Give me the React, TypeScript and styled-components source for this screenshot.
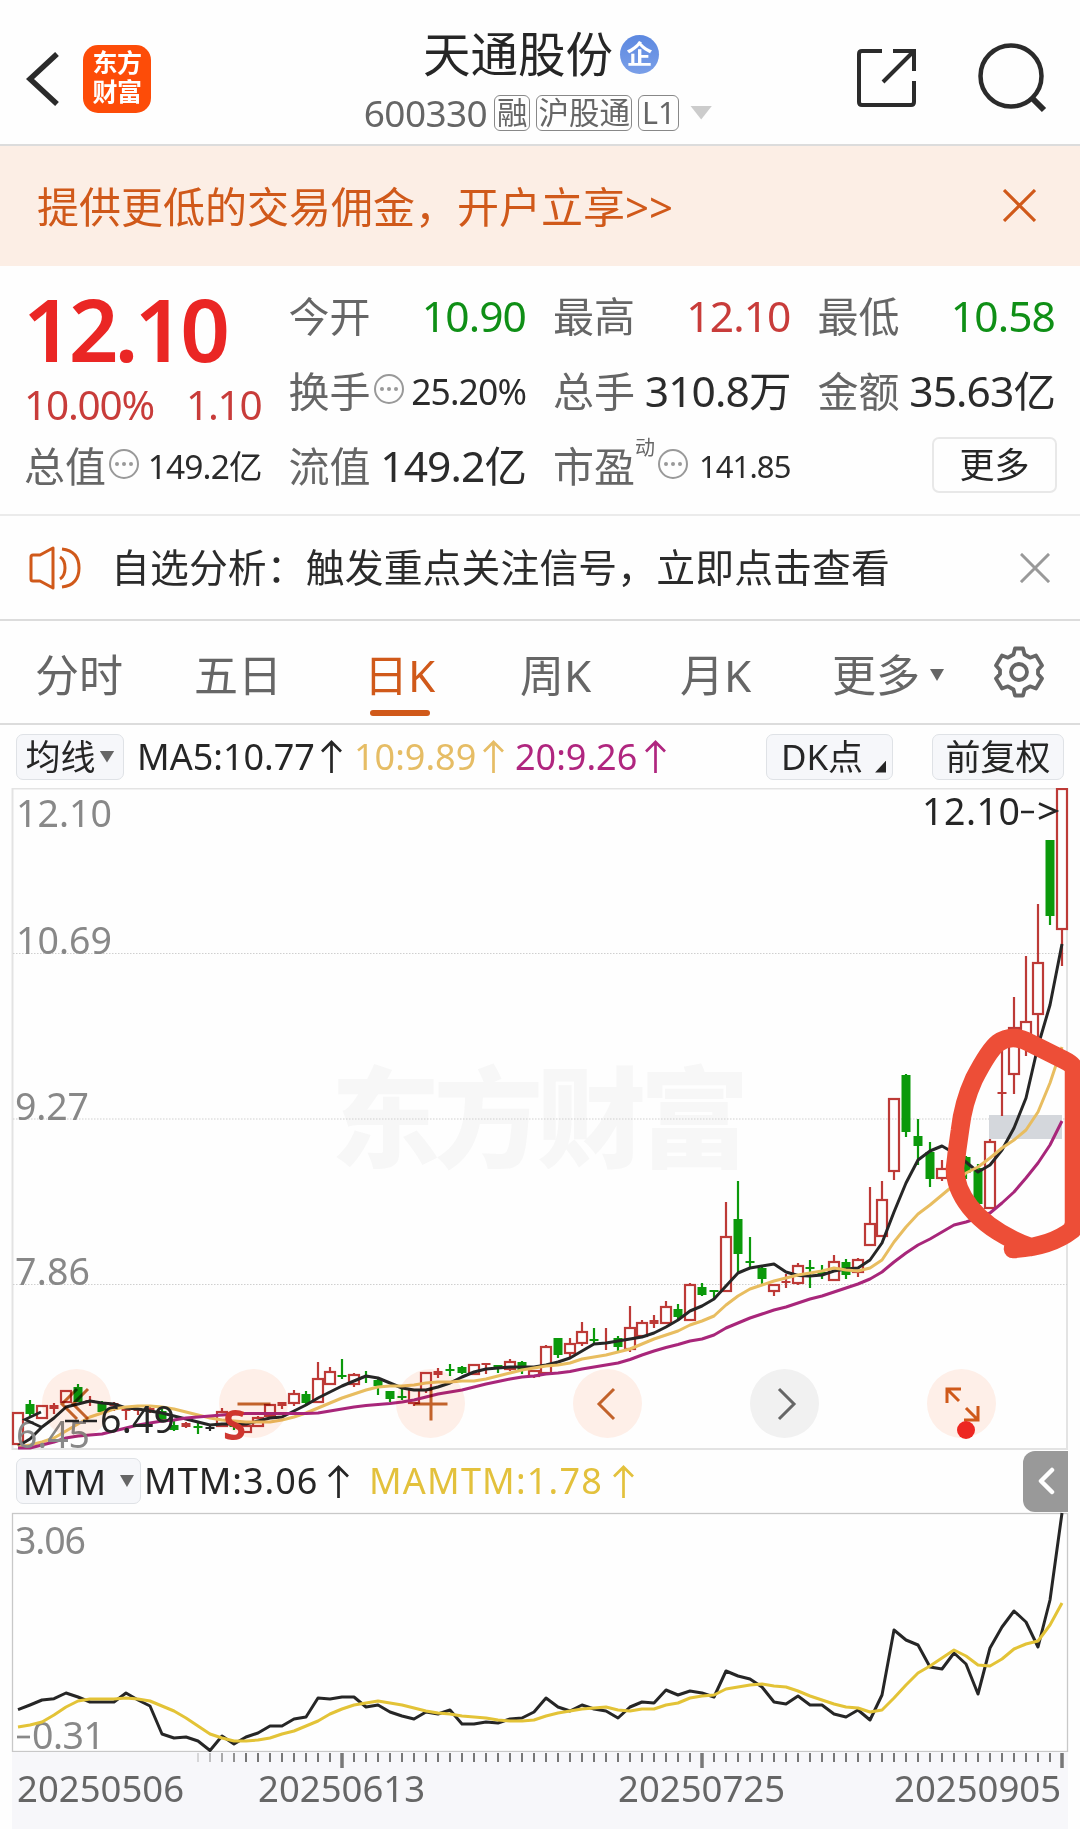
import React from 'react';
import styled, { createGlobalStyle } from 'styled-components';

const FONT = '"Noto Sans", "Noto Sans CJK SC", sans-serif';
const ORANGE = '#d0591a';
const RED = '#bd3a37';
const GREEN = '#0b990b';
const INK = '#262626';

const Global = createGlobalStyle`
  * { box-sizing: border-box; }
  body { margin: 0; background: #fefefe; font-family: ${FONT}; color: ${INK}; }
  button { font-family: inherit; color: inherit; padding: 0; margin: 0; background: none; border: 0; }
  svg { display: block; flex: none; }
`;

const Page = styled.main`
  width: 1080px;
  height: 1829px;
  overflow: hidden;
  display: flex;
  flex-direction: column;
  line-height: 1;
`;

/* ---------- header ---------- */
const Header = styled.header`
  height: 146px;
  flex: none;
  display: grid;
  grid-template-columns: 326px 1fr 326px;
  border-bottom: 2px solid #dcdcdc;
`;
const HeaderLeft = styled.div`
  display: flex;
  align-items: center;
  gap: 23px;
  padding: 13px 0 0 26px;
`;
const HeaderRight = styled.div`
  display: flex;
  align-items: center;
  justify-content: flex-end;
  gap: 60px;
  padding: 12px 33px 0 0;
`;
const Logo = styled.div`
  width: 68px;
  height: 68px;
  padding-bottom: 4px;
  border-radius: 15px;
  background: #fd4c08;
  color: #fff;
  font-size: 25px;
  font-weight: 700;
  line-height: 29px;
  display: grid;
  place-content: center;
  text-align: center;
  letter-spacing: -0.5px;
`;
const HeaderCenter = styled.div`
  display: flex;
  flex-direction: column;
  align-items: center;
`;
const TitleRow = styled.h1`
  margin: 29px 0 0;
  padding-left: 2px;
  height: 50px;
  display: flex;
  align-items: center;
  gap: 7px;
  font-size: 47.5px;
  font-weight: 400;
`;
const CorpBadge = styled.span`
  width: 39px;
  height: 39px;
  border-radius: 50%;
  background: linear-gradient(#5c88e0, #7a9fe8);
  color: #fff;
  font-size: 26px;
  font-weight: 700;
  display: grid;
  place-content: center;
`;
const CodeRow = styled.div`
  margin-top: 15px;
  height: 37px;
  display: flex;
  align-items: center;
  gap: 6px;
  color: #666;
  padding-right: 4px;
`;
const Code = styled.span`
  font-size: 37px;
  letter-spacing: -0.6px;
  margin-right: 1px;
`;
const Tag = styled.span<{ $w: number }>`
  width: ${(p) => p.$w}px;
  height: 36px;
  border: 1.5px solid #888;
  border-radius: 6px;
  font-size: 30.5px;
  display: grid;
  place-content: center;
  white-space: nowrap;
`;
const Caret = styled.i<{ $w: number; $h: number; $c?: string; $ml?: number }>`
  flex: none;
  width: ${(p) => p.$w}px;
  height: ${(p) => p.$h}px;
  margin-left: ${(p) => p.$ml ?? 0}px;
  background: ${(p) => p.$c || '#666'};
  clip-path: polygon(0 0, 100% 0, 50% 100%);
`;

/* ---------- promo banner ---------- */
const Banner = styled.section`
  height: 120px;
  flex: none;
  display: flex;
  align-items: center;
  justify-content: space-between;
  padding: 1px 44px 0 37px;
  background: #fceee5;
  color: ${ORANGE};
  font-size: 42px;
  & > svg { margin-top: -3px; }
`;

/* ---------- quote ---------- */
const Quote = styled.section`
  height: 250px;
  flex: none;
  padding: 13px 25px 0 24px;
  display: grid;
  grid-template-columns: repeat(4, 237.5px);
  grid-template-rows: repeat(3, 75px);
  column-gap: 27px;
  border-bottom: 2px solid #ebebeb;
`;
const PriceCell = styled.div`
  grid-row: span 2;
  display: flex;
  flex-direction: column;
`;
const Price = styled.strong`
  height: 102px;
  margin-left: -1px;
  padding-bottom: 4px;
  display: flex;
  align-items: center;
  color: #ea2624;
  font-size: 87px;
  font-weight: 600;
  letter-spacing: -4px;
`;
const Change = styled.div`
  height: 46px;
  padding-top: 3px;
  display: flex;
  align-items: center;
  justify-content: space-between;
  font-size: 40.5px;
  letter-spacing: -1.2px;
  color: #c83c3a;
`;
const Cell = styled.div`
  display: flex;
  align-items: center;
  white-space: nowrap;
`;
const Label = styled.span`
  font-size: 41px;
  color: #666;
`;
const Value = styled.span<{ $c?: string; $size?: number }>`
  margin-left: auto;
  color: ${(p) => p.$c || '#2b2b2b'};
  font-size: ${(p) => p.$size ?? 42.5}px;
  letter-spacing: -0.9px;
`;
const Info = styled.i`
  width: 30px;
  height: 30px;
  margin: -6px 0 0 3px;
  border: 2px solid #999;
  border-radius: 50%;
  display: flex;
  align-items: center;
  justify-content: center;
  gap: 3px;
  &::before, &::after, & > b {
    content: '';
    width: 4px;
    height: 4px;
    border-radius: 50%;
    background: #999;
  }
`;
const Sup = styled.sup`
  font-size: 20px;
  line-height: 20px;
  align-self: flex-start;
  margin-top: 9px;
  color: #666;
`;
const MoreButton = styled.button`
  width: 125px;
  height: 56px;
  margin: -3px -2px 0 auto;
  border: 2px solid #e8e8e8;
  border-radius: 7px;
  font-size: 35px;
  line-height: 1;
  padding-bottom: 2px;
`;

/* ---------- notice ---------- */
const Notice = styled.section`
  height: 105px;
  flex: none;
  display: flex;
  align-items: center;
  padding: 0 30px 0 29px;
  border-bottom: 2px solid #dcdcdc;
  font-size: 38.8px;
  color: #2b2b2b;
  & > span { flex: 1; margin-left: 28px; letter-spacing: 0.15px; }
`;

/* ---------- tabs ---------- */
const Tabs = styled.nav`
  height: 104px;
  flex: none;
  display: grid;
  grid-template-columns: 159px 170px 156px 160px 152px 161px auto;
  justify-items: start;
  padding: 0 34px 0 35px;
  border-bottom: 2px solid #dcdcdc;
`;
const Tab = styled.button<{ $on?: boolean }>`
  height: 96px;
  padding-top: 31px;
  display: grid;
  grid-template-rows: 46px 12px 6px;
  justify-items: center;
  font-size: 44px;
  line-height: 46px;
  white-space: nowrap;
  color: ${(p) => (p.$on ? ORANGE : '#666')};
  &::after {
    grid-row: 3;
    content: '';
    width: 60px;
    height: 6px;
    border-radius: 3px;
    background: ${(p) => (p.$on ? ORANGE : 'transparent')};
  }
`;
const TabLabel = styled.span`
  display: flex;
  align-items: center;
  gap: 10px;
`;
const GearSlot = styled.div`
  height: 102px;
  display: flex;
  align-items: center;
`;

/* ---------- indicator rows ---------- */
const IndicatorRow = styled.div<{ $h: number; $pr?: number }>`
  height: ${(p) => p.$h}px;
  flex: none;
  display: flex;
  align-items: center;
  padding: 0 ${(p) => p.$pr ?? 12}px 0 16px;
`;
const Chip = styled.button<{ $w: number; $mr?: number }>`
  width: ${(p) => p.$w}px;
  height: 46px;
  flex: none;
  margin-right: ${(p) => p.$mr ?? 0}px;
  border: 1.5px solid #dfe2e6;
  border-radius: 7px;
  background: #f6f7fa;
  display: flex;
  align-items: center;
  justify-content: center;
  font-size: 35px;
  line-height: 1;
  white-space: nowrap;
`;
const Reading = styled.span<{ $c: string; $w: number; $ml: number; $ls?: number }>`
  width: ${(p) => p.$w}px;
  margin-left: ${(p) => p.$ml}px;
  flex: none;
  display: flex;
  align-items: center;
  justify-content: space-between;
  color: ${(p) => p.$c};
  font-size: 36px;
  letter-spacing: ${(p) => p.$ls ?? 0}px;
  white-space: nowrap;
`;
const Push = styled.span`flex: 1;`;
const Corner = styled.i`
  width: 11px;
  height: 12px;
  margin: 20px -8px 0 12px;
  background: ${INK};
  clip-path: polygon(100% 0, 100% 100%, 0 100%);
`;
const Collapse = styled.button`
  width: 45px;
  height: 61px;
  border-radius: 12px 0 0 12px;
  background: #999;
  display: grid;
  place-content: center;
`;

/* ---------- charts ---------- */
const ChartPanel = styled.div<{ $h: number }>`
  position: relative;
  flex: none;
  width: 1080px;
  height: ${(p) => p.$h}px;
`;
const Controls = styled.div`
  position: absolute;
  left: 42px;
  right: 84px;
  top: 581px;
  display: flex;
  justify-content: space-between;
  mix-blend-mode: multiply;
`;
const RoundButton = styled.button<{ $gray?: boolean }>`
  position: relative;
  width: 69px;
  height: 69px;
  border-radius: 50%;
  background: ${(p) => (p.$gray ? '#f2f2f2' : '#fff0e9')};
  display: grid;
  place-content: center;
`;
const Dot = styled.i`
  position: absolute;
  left: 30px;
  bottom: -1px;
  width: 18px;
  height: 18px;
  border-radius: 50%;
  background: #ee2722;
`;
const Axis = styled.div`
  flex: 1;
  margin: 0 12px;
  background: #f7f7fa;
  display: flex;
  flex-direction: column;
`;
const Dates = styled.div`
  display: grid;
  grid-template-columns: 241px 360px 276px 1fr;
  padding-left: 5px;
  margin-top: -4px;
  font-size: 36.5px;
  line-height: 40px;
  letter-spacing: 0;
  color: #666;
`;

type K = 'r' | 'g' | 'k';
/* [kind, high, body top, body bottom, low] in chart pixels */
const candles: [K, number, number, number, number][] = [
  ['r',1413,1413,1444,1444],['g',1400,1404,1414,1417],['r',1405,1406,1418,1418],['r',1403,1405,1409,1414],
  ['r',1391,1391,1402,1402],['g',1384,1387,1402,1402],['r',1396,1400,1402,1406],['g',1401,1402,1412,1412],
  ['r',1402,1403,1406,1411],['r',1409,1409,1411,1420],['r',1408,1409,1411,1415],['r',1406,1408,1412,1413],
  ['g',1409,1411,1420,1421],['g',1420,1425,1430,1431],['r',1422,1423,1427,1428],['g',1423,1426,1428,1434],
  ['k',1425,1427,1429,1431],['r',1408,1412,1426,1426],['g',1420,1424,1427,1430],['r',1425,1426,1432,1433],
  ['r',1416,1418,1426,1426],['r',1404,1405,1416,1416],['r',1402,1402,1406,1409],['r',1390,1394,1403,1406],
  ['g',1391,1394,1403,1406],['r',1362,1379,1402,1402],['r',1367,1372,1384,1384],['g',1359,1375,1377,1379],
  ['r',1373,1375,1384,1387],['g',1371,1376,1378,1383],['g',1378,1380,1386,1395],['g',1391,1391,1399,1402],
  ['g',1388,1396,1398,1400],['r',1389,1390,1403,1406],['r',1373,1373,1390,1393],['r',1368,1371,1375,1378],
  ['g',1364,1369,1371,1376],['g',1366,1367,1373,1374],['r',1365,1365,1374,1374],['r',1363,1363,1365,1374],
  ['g',1365,1365,1367,1373],['r',1359,1362,1369,1371],['g',1361,1362,1370,1374],['r',1370,1371,1376,1378],
  ['r',1345,1347,1373,1375],['g',1338,1338,1355,1358],['r',1338,1344,1353,1357],['r',1322,1332,1343,1346],
  ['g',1328,1339,1341,1343],['r',1328,1342,1344,1350],['g',1336,1338,1347,1351],['r',1306,1328,1349,1352],
  ['r',1320,1323,1336,1336],['r',1315,1320,1324,1328],['r',1301,1307,1323,1323],['g',1304,1309,1317,1319],
  ['r',1283,1285,1320,1320],['g',1283,1287,1295,1296],['g',1290,1290,1292,1298],['r',1202,1237,1291,1291],
  ['g',1181,1219,1254,1272],['g',1237,1261,1263,1268],['g',1265,1268,1279,1284],['r',1284,1285,1291,1296],
  ['r',1274,1281,1283,1288],['r',1263,1266,1283,1285],['g',1260,1267,1269,1288],['g',1265,1272,1274,1279],
  ['r',1255,1262,1280,1280],['g',1259,1262,1275,1279],['r',1258,1260,1272,1277],['r',1187,1224,1245,1245],
  ['r',1181,1200,1236,1236],['r',1099,1099,1171,1180],['g',1074,1075,1132,1137],['g',1119,1136,1146,1165],
  ['g',1142,1152,1179,1187],['r',1160,1169,1178,1181],['r',1140,1150,1175,1178],['g',1156,1157,1173,1179],
  ['g',1164,1168,1204,1205],['r',1139,1142,1208,1209],['r',1045,1092,1094,1116],['r',997,1028,1074,1094],
  ['r',956,1022,1045,1056],['r',904,963,1014,1040],['g',840,840,916,925],['r',789,789,929,966],
];
const ma5 = [1446,1439,1427,1418,1407,1404,1401,1403,1404,1408,1409,1411,1413,1416,1419,1422,1425,1424,1424,1424,1421,1418,1417,1411,1405,1398,1392,1386,1381,1376,1378,1383,1388,1390,1390,1387,1383,1377,1372,1369,1368,1367,1367,1367,1365,1362,1358,1351,1344,1343,1341,1339,1337,1333,1327,1320,1311,1306,1299,1286,1273,1268,1266,1264,1272,1275.5,1276,1275,1271,1269,1268,1260,1243,1212,1183,1160,1151,1146,1153,1162,1172,1165,1150,1128,1098,1046,1005,944];
const ma10 = [1447,1445,1442,1438,1431,1424,1417,1413,1409,1407,1406,1406,1407,1409,1412,1415,1418,1420,1421,1422,1422,1422,1420,1417,1413,1408,1403,1398,1394,1390,1387,1386,1386,1385,1383,1382,1382,1381,1381,1379,1376,1373,1370,1368,1366,1365,1363,1359,1357,1355,1352,1349,1344,1339,1335,1331,1325,1321,1316,1305,1296,1289,1285,1281,1278,1275,1273,1271,1268,1270,1271,1268,1260,1242,1227,1214,1205,1195,1185,1173,1167,1158,1148,1140,1130,1112,1083,1047];
const ma20 = [1448,1448,1445,1442,1438,1436,1435,1434,1431,1428,1425,1423,1421,1420,1418,1417,1416,1415,1414,1413.5,1413.5,1413.5,1413.5,1413.5,1413.5,1413,1411,1409,1407,1405.5,1404.5,1403.5,1402,1400,1397,1394,1392,1390,1387,1384,1381.5,1379,1377,1376,1374,1373,1371.5,1369,1367,1365,1363,1359.5,1355,1351,1347.5,1344.5,1341,1339,1335,1328,1323,1318,1314,1310,1307,1303,1299,1296,1292,1288,1284,1279,1272,1262,1253,1245,1239,1232,1225,1222,1218,1213,1203,1192,1178,1163,1145,1121];
const mtm = [1709.7,1705,1700,1698.7,1693,1697,1702,1702,1702,1693,1700,1706,1734,1738,1737,1741,1750.5,1736,1744,1737,1733,1726,1726,1719,1717,1698,1699,1697,1697,1707,1705,1712,1716,1719,1712,1714,1710,1724,1724,1722,1723,1719,1718,1712,1698,1707,1711,1705,1709,1711,1718,1707,1702,1703,1690,1695,1691,1693,1697,1671,1676,1679,1687,1702,1704,1696,1705,1705,1714,1717,1710,1720,1695,1630,1640,1645,1667,1669,1653,1664,1694,1648,1627,1611,1622,1647,1600,1513];
const mamtm = [1727,1725,1722,1715,1707,1701,1699,1699,1699,1698,1699,1701,1706,1711,1718,1726,1734,1738,1741,1741,1740,1738,1734,1731,1726,1721,1714,1709,1705,1703,1701,1703,1705,1708,1711,1713,1714,1716,1717,1718,1720,1721,1721,1720,1716,1713,1711,1709,1708,1707,1710,1711,1709,1709,1705,1703,1698,1696,1695,1689,1687,1685,1684,1686,1687,1691,1696,1700,1704,1707,1708,1712,1710,1698,1685,1673,1666,1658,1650,1656,1665,1666,1659,1649,1644,1641,1625,1603];

const xAt = (i: number) => 18 + 12 * i;
const toPoints = (ys: number[]) => ys.map((y, i) => `${xAt(i)},${y}`).join(' ');

const Line = ({ ys, color }: { ys: number[]; color: string }) => (
  <polyline points={toPoints(ys)} fill="none" stroke={color} strokeWidth={3} strokeLinejoin="round" />
);

const Candle = ({ i, c }: { i: number; c: [K, number, number, number, number] }) => {
  const [k, high, top, bottom, low] = c;
  const color = k === 'r' ? RED : k === 'g' ? GREEN : INK;
  const x = xAt(i);
  const hollow = k === 'r' && bottom - top > 4;
  return (
    <g stroke={color} strokeWidth={2.2} fill={color}>
      {high < top && <line x1={x} x2={x} y1={high} y2={top} />}
      {low > bottom && <line x1={x} x2={x} y1={bottom} y2={low} />}
      {hollow ? (
        <rect x={x - 5} y={top} width={10} height={bottom - top} fill="none" />
      ) : (
        <rect x={x - 4.5} y={top} width={9} height={bottom - top} stroke="none" />
      )}
    </g>
  );
};

const ScaleText = ({ x, y, w, children, color = '#888' }: { x: number; y: number; w: number; children: string; color?: string }) => (
  <text x={x} y={y} textLength={w} fill={color} fontSize={37.5} fontFamily={FONT}>{children}</text>
);

const UpArrow = () => (
  <svg width="21" height="33" viewBox="0 0 21 33" fill="none" stroke="currentColor" strokeWidth="2.7">
    <path d="M10.5 33V2M1 11.5 10.5 2 20 11.5" />
  </svg>
);

const CloseIcon = ({ size, color, w }: { size: number; color: string; w: number }) => (
  <svg width={size} height={size} viewBox="0 0 32 32" fill="none" stroke={color} strokeWidth={w}>
    <path d="M1 1 31 31M31 1 1 31" />
  </svg>
);

const InfoMark = () => <Info><b /></Info>;

const Glyph = ({ d, color = '#c3622a', w = 3 }: { d: string; color?: string; w?: number }) => (
  <svg width="40" height="40" viewBox="-20 -20 40 40" fill="none" stroke={color} strokeWidth={w}>
    <path d={d} />
  </svg>
);

const PriceChart = () => (
  <ChartPanel $h={662}>
    <svg width="1080" height="662" viewBox="0 788 1080 662">
      <rect x="12.5" y="788.5" width="1054.5" height="660.5" fill="none" stroke="#e3e3e3" strokeWidth="2" />
      <text x="331" y="1159" textLength="418" fontSize="109" fontWeight="900" fill="#f7f7f7" fontFamily={'"Noto Sans CJK SC", sans-serif'}>东方财富</text>
      {[953.5, 1119, 1284.5].map((y) => (
        <line key={y} x1="13" x2="1067" y1={y} y2={y} stroke="#cfcfcf" strokeWidth="1.2" strokeDasharray="1.5 1.5" />
      ))}
      <rect x="989" y="1115" width="73" height="24" fill="#d4d7dc" />
      {candles.map((c, i) => <Candle key={i} i={i} c={c} />)}
      <Line ys={ma5} color={INK} />
      <Line ys={ma10} color="#e8bd60" />
      <Line ys={ma20} color="#a8267a" />
      <ScaleText x={16} y={827} w={96}>12.10</ScaleText>
      <ScaleText x={16} y={954} w={96}>10.69</ScaleText>
      <ScaleText x={15} y={1120} w={74}>9.27</ScaleText>
      <ScaleText x={15} y={1285} w={75}>7.86</ScaleText>
      <ScaleText x={16} y={1448} w={74}>6.45</ScaleText>
      <text x="223" y="1440" fontSize="42" fontWeight="700" fill="#cf3730" fontFamily={FONT}>S</text>
      <ScaleText x={100} y={1433} w={75} color={INK}>6.49</ScaleText>
      <path d="M41 1412 25 1419.500 41 1427M65 1421H79M83 1421H97" fill="none" stroke={INK} strokeWidth="2.7" />
      <ScaleText x={922} y={825} w={98} color={INK}>12.10</ScaleText>
      <path d="M1021 812H1034M1039 803.500 1056 811 1039 818.500" fill="none" stroke={INK} strokeWidth="2.7" />
      <path
        d="M1013 1249Q1050 1247 1072 1230L1074 1224V1068Q1072 1064 1064 1060L1030 1043Q1012 1033 998 1043Q989 1050 974 1079Q963 1103 960 1130Q957 1150 955 1168Q955 1188 970 1207Q990 1232 1030 1247"
        fill="none" stroke="#ed4e37" strokeWidth="18.5" strokeLinecap="round" strokeLinejoin="round"
      />
    </svg>
    <Controls>
      <RoundButton aria-label="earliest"><Glyph d="M0 -15-15 0 0 15M11 -15-4 0 11 15" /></RoundButton>
      <RoundButton aria-label="zoom out"><Glyph d="M-16.500 0H16.500" /></RoundButton>
      <RoundButton aria-label="zoom in"><Glyph d="M-16.500 0H16.500M0 -16.500V16.500" /></RoundButton>
      <RoundButton aria-label="previous"><Glyph d="M6 -15-9 0 6 15" /></RoundButton>
      <RoundButton $gray aria-label="next"><Glyph d="M-6 -15 9 0-6 15" color="#666" /></RoundButton>
      <RoundButton aria-label="full screen">
        <Glyph color={ORANGE} d="M-15 -1V-15H-1M-15 -15-3 -3M16 2V16H2M16 16 4 4" />
        <Dot />
      </RoundButton>
    </Controls>
  </ChartPanel>
);

const MtmChart = () => (
  <ChartPanel $h={240}>
    <svg width="1080" height="240" viewBox="0 1512 1080 240">
      <rect x="12.500" y="1513.500" width="1055" height="238" fill="none" stroke="#c8c8c8" strokeWidth="1.300" />
      <ScaleText x={15} y={1554} w={71}>3.06</ScaleText>
      <path d="M17 1737H30" stroke="#888" strokeWidth="2.700" />
      <ScaleText x={32} y={1749} w={73}>0.31</ScaleText>
      <Line ys={mtm} color={INK} />
      <Line ys={mamtm} color="#e3c337" />
    </svg>
  </ChartPanel>
);

const Ticks = () => (
  <svg width="1056" height="20" viewBox="12 1752 1056 20">
    {Array.from({ length: 73 }, (_, k) => k + 15).map((i) => {
      const major = i === 27 || i === 57 || i === 87;
      return (
        <line key={i} x1={xAt(i)} x2={xAt(i)} y1={1753} y2={major ? 1768 : 1762}
          stroke="#777" strokeWidth={major ? 3.5 : 2} opacity={i < 19 ? 0.25 + (i - 15) * 0.18 : 1} />
      );
    })}
  </svg>
);

const tabNames = ['分时', '五日', '日K', '周K', '月K'];

export default function App() {
  return (
    <Page>
      <Global />
      <Header>
        <HeaderLeft>
          <svg width="34" height="54" viewBox="0 0 34 54" fill="none" stroke="#2b2b2b" strokeWidth="5.5">
            <path d="M31 2 4 27 31 52" />
          </svg>
          <Logo>东方<br />财富</Logo>
        </HeaderLeft>
        <HeaderCenter>
          <TitleRow>天通股份<CorpBadge>企</CorpBadge></TitleRow>
          <CodeRow>
            <Code>600330</Code>
            <Tag $w={36}>融</Tag>
            <Tag $w={96}>沪股通</Tag>
            <Tag $w={41}>L1</Tag>
            <Caret $w={22} $h={14} $c="#ccc" $ml={5} />
          </CodeRow>
        </HeaderCenter>
        <HeaderRight>
          <svg width="60" height="60" viewBox="0 0 60 60" fill="none" stroke="#2b2b2b" strokeWidth="4">
            <path d="M25 3H5Q2 3 2 6V54Q2 57 5 57H54Q57 57 57 54V33M36 3H57V23M57 3 26 34" />
          </svg>
          <svg width="70" height="70" viewBox="0 0 70 70" fill="none" stroke="#2b2b2b" strokeWidth="4.500">
            <circle cx="34" cy="33" r="30.500" />
            <path d="M54 54 67 67" strokeWidth="6" />
          </svg>
        </HeaderRight>
      </Header>

      <Banner>
        <span>提供更低的交易佣金，开户立享&gt;&gt;</span>
        <CloseIcon size={33} color={ORANGE} w={3} />
      </Banner>

      <Quote>
        <PriceCell>
          <Price>12.10</Price>
          <Change><span>10.00%</span><span>1.10</span></Change>
        </PriceCell>
        <Cell><Label>今开</Label><Value $c="#0f8f16">10.90</Value></Cell>
        <Cell><Label>最高</Label><Value $c="#c83c3a">12.10</Value></Cell>
        <Cell><Label>最低</Label><Value $c="#0f8f16">10.58</Value></Cell>
        <Cell><Label>换手</Label><InfoMark /><Value $size={35.5}>25.20%</Value></Cell>
        <Cell><Label>总手</Label><Value>310.8万</Value></Cell>
        <Cell><Label>金额</Label><Value>35.63亿</Value></Cell>
        <Cell><Label>总值</Label><InfoMark /><Value $size={33.5}>149.2亿</Value></Cell>
        <Cell><Label>流值</Label><Value>149.2亿</Value></Cell>
        <Cell><Label>市盈</Label><Sup>动</Sup><InfoMark /><Value $size={31}>141.85</Value></Cell>
        <Cell><MoreButton>更多</MoreButton></Cell>
      </Quote>

      <Notice>
        <svg width="54" height="44" viewBox="0 0 54 44" fill="none" stroke="#d0591a" strokeWidth="3" strokeLinejoin="round">
          <path d="M2 11Q2 9 4 9H11L24 2V42L11 35H4Q2 35 2 33Z" />
          <path d="M31 11Q36 14 36 22T31 33M33 3Q50 5 50 22T33 41" />
        </svg>
        <span>自选分析：触发重点关注信号，立即点击查看</span>
        <CloseIcon size={30} color="#999" w={3.2} />
      </Notice>

      <Tabs>
        {tabNames.map((t) => <Tab key={t} $on={t === '日K'}>{t}</Tab>)}
        <Tab><TabLabel>更多<Caret $w={14} $h={12} /></TabLabel></Tab>
        <GearSlot>
          <svg width="52" height="52" viewBox="0 0 52 52" fill="none" stroke="#666" strokeWidth="3.800" strokeLinejoin="round">
            <path d="M22 2.500H30L31.500 8.500 37 11.700 43 9.500 49 19.500 45 24V28L49 32.500 43 42.500 37 40.300 31.500 43.500 30 49.500H22L20.500 43.500 15 40.300 9 42.500 3 32.500 7 28V24L3 19.500 9 9.500 15 11.700 20.500 8.500Z" />
            <circle cx="26" cy="26" r="8" />
          </svg>
        </GearSlot>
      </Tabs>

      <IndicatorRow $h={63} $pr={16}>
        <Chip $w={108}>均线<Caret $w={15} $h={12} $ml={4} /></Chip>
        <Reading $c={INK} $w={205} $ml={13}>MA5:10.77<UpArrow /></Reading>
        <Reading $c="#e6bd65" $w={150} $ml={12}>10:9.89<UpArrow /></Reading>
        <Reading $c="#b0267f" $w={151} $ml={11}>20:9.26<UpArrow /></Reading>
        <Push />
        <Chip $w={127} $mr={39}>DK点<Corner /></Chip>
        <Chip $w={132}>前复权</Chip>
      </IndicatorRow>

      <PriceChart />

      <IndicatorRow $h={62}>
        <Chip $w={125}>MTM<Caret $w={14} $h={12} $ml={14} /></Chip>
        <Reading $c={INK} $w={205} $ml={3} $ls={1}>MTM:3.06<UpArrow /></Reading>
        <Reading $c="#e3c13c" $w={265} $ml={20} $ls={1.2}>MAMTM:1.78<UpArrow /></Reading>
        <Push />
        <Collapse aria-label="expand">
          <svg width="18" height="28" viewBox="0 0 18 28" fill="none" stroke="#fff" strokeWidth="4.500" strokeLinecap="round" strokeLinejoin="round">
            <path d="M15 3 4 14 15 25" />
          </svg>
        </Collapse>
      </IndicatorRow>

      <MtmChart />

      <Axis>
        <Ticks />
        <Dates><span>20250506</span><span>20250613</span><span>20250725</span><span>20250905</span></Dates>
      </Axis>
    </Page>
  );
}
